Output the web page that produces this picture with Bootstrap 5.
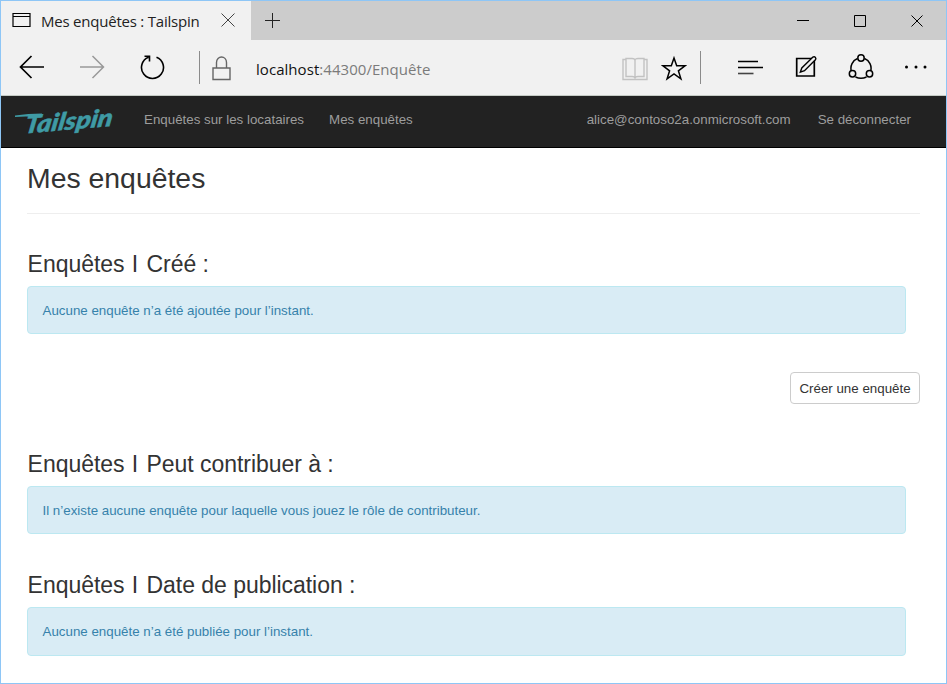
<!DOCTYPE html>
<html lang="fr">
<head>
<meta charset="utf-8">
<meta name="viewport" content="width=device-width, initial-scale=1">
<title>Mes enquêtes : Tailspin</title>
<link href="https://cdn.jsdelivr.net/npm/bootstrap@5.3.0/dist/css/bootstrap.min.css" rel="stylesheet">
<style>
body{font-family:"Liberation Sans",Arial,sans-serif;font-size:13.33px;color:#333;background:#fff}
svg{display:block;flex:none;fill:none;stroke:#000}
.window-frame{height:684px;border:1px solid #8ec6f6;overflow:hidden}
.tab-strip{height:39px;background:#ccc}
.active-tab{width:250px;background:#f1f1f1;padding-left:11px;font:15px "Open Sans",sans-serif;color:#222}
.tab-title{width:160px;margin-left:10px;letter-spacing:-.22px;white-space:nowrap}
.tab-close{margin-left:20px;margin-bottom:2px}
.window-controls{gap:43px;padding-right:22px}
.address-row{height:56px;background:#f1f1f1;border-bottom:1px solid #c5cbc5;padding:0 18px 1px}
.divider{width:1px;height:33px;background:#8b8b8b;flex:none}
.address{font:15px "Open Sans",sans-serif;color:#7b7b7b;margin-left:24px;padding-top:3px;letter-spacing:.05px;white-space:nowrap}
.address span{color:#111}
.site-nav{height:52px;background:#222;border-bottom:1px solid #000;padding:0 35px 4px 13px}
.site-nav .nav-link{color:#9d9d9d;padding:0;white-space:nowrap}
.page-body{padding:15px 26px 0}
.page-title{font-size:28.4px;font-weight:400;line-height:31px;height:51px;border-bottom:1px solid #eee;margin:0 0 35px}
.section-title{font-size:23px;line-height:30px;height:37px;font-weight:400;margin:0;white-space:nowrap;letter-spacing:-.04px;padding-left:.6px}
.section-title i{font-style:normal;margin:0 2px 0 1px}
.notice{width:879px;height:48px;margin:0;padding:0 14.5px;border-radius:4px;color:#3682ab;background:#d9ecf5;border:1px solid #bce8f1;line-height:47px}
.create-btn{width:130px;height:32px;font-size:13.33px;padding:1px 0 0;border:1px solid #ccc;border-radius:4px;color:#333;background:#fff}
.create-row{margin:38px 0 45px}
.published{margin-top:36px}
.published .notice{height:49px}
</style>
</head>
<body>
<div class="window-frame">
  <header class="tab-strip d-flex">
    <div class="active-tab d-flex align-items-center">
      <svg width="19" height="16" style="margin-bottom:1px" stroke="#222"><path d="M1 1.500h17v13H1zM1 4.500h17" stroke-width="1.200"/></svg>
      <span class="tab-title">Mes enquêtes : Tailspin</span>
      <svg class="tab-close" width="14" height="14"><path d="M.5.5l13 13M13.500.5l-13 13" stroke="#444"/></svg>
    </div>
    <svg width="44" height="39"><path d="M14 19.500h15M21.500 12v15" stroke="#222"/></svg>
    <div class="window-controls d-flex align-items-center ms-auto">
      <svg width="14" height="14"><path d="M1 6.500h12"/></svg>
      <svg width="14" height="14"><path d="M1.500 1.500h11v11h-11z"/></svg>
      <svg width="14" height="14"><path d="M1.500 1.500l11 11M12.500 1.500l-11 11"/></svg>
    </div>
  </header>
  <div class="address-row d-flex align-items-center">
    <svg width="26" height="24"><path d="M12.500 1L1.500 12l11 11M1.500 12H25" stroke-width="1.700"/></svg>
    <svg width="26" height="24" style="margin-left:34px"><path d="M13.500 1l11 11-11 11M24.500 12H1" stroke="#999" stroke-width="1.500"/></svg>
    <svg width="26" height="26" style="margin-left:35px"><path d="M16.500 3.200A11 11 0 1 1 8.500 3.200M4.500 2.200H9.500V7.500" stroke-width="1.600"/></svg>
    <div class="divider" style="margin-left:33px"></div>
    <svg width="20" height="25" style="margin-left:12px;margin-top:2px"><path d="M1 12h17v11.500H1zM4.500 12V6.500C4.500-.8 14.500-.8 14.500 6.500V12" stroke="#666" stroke-width="1.400"/></svg>
    <div class="address"><span>localhost</span>:44300/Enquête</div>
    <svg class="ms-auto" width="26" height="24" style="margin-top:3px"><path d="M4 2.500H1v20h24v-20h-3M4 1.500h6q3 0 3 2 0-2 3-2h6v18h-6q-3 0-3 2 0-2-3-2H4zM13 3.500v18" stroke="#c2c2c2" stroke-width="1.400"/></svg>
    <svg width="26" height="26" style="margin-left:13px;margin-top:2px"><path d="M13 3l2.700 7.800H24l-6.600 5 2.500 8L13 19l-6.900 4.800 2.500-8-6.600-5h8.300z" stroke-width="1.500"/></svg>
    <div class="divider" style="margin-left:13px"></div>
    <svg width="26" height="18" style="margin-left:36px;margin-bottom:1px"><path d="M1 3.500h20M1 9.500h25" stroke-width="1.300"/><path d="M1 15.500h15.500" stroke="#444" stroke-width="1.600"/></svg>
    <svg width="24" height="24" style="margin-left:31px"><path d="M2.700 3.500H20.300v17.500H2.700z" stroke-width="1.700"/><path d="M6.300 17.200l1.500-4.200L18.700 2.200q1.600-1 2.700.2 1 1.200 0 2.400L10.500 15.700z" fill="#f1f1f1" stroke-width="1.400"/></svg>
    <svg width="26" height="26" style="margin-left:30px" stroke-width="1.500"><path d="M9.500 4.500A10.500 10.500 0 0 0 3.300 17M16.500 4.500A10.500 10.500 0 0 1 22.700 17M7.500 23q5.500 2.500 11 0"/><circle cx="13" cy="4" r="3.200"/><circle cx="4.500" cy="19.800" r="3.200"/><circle cx="21.500" cy="19.800" r="3.200"/></svg>
    <svg width="25" height="6" style="margin-left:29px"><g fill="#000" stroke="none"><circle cx="3.500" cy="3" r="1.500"/><circle cx="13" cy="3" r="1.500"/><circle cx="22" cy="3" r="1.500"/></g></svg>
  </div>
  <nav class="site-nav navbar-expand d-flex align-items-center">
    <svg width="102" height="34" style="margin-top:3px" role="img" aria-label="Tailspin"><g fill="#3f9ba5" stroke="none"><text x="0" y="0" textLength="88" lengthAdjust="spacingAndGlyphs" transform="translate(10 29.500) rotate(-5) skewX(-14)" font-family="Lato" font-size="24" font-weight="900" font-style="italic" stroke="#3f9ba5" stroke-width=".5">Tailspin</text><path d="M1 11.500q13-2 27-2l-1 4q-12-1.500-26-.5z"/></g></svg>
    <div class="navbar-nav" style="margin-left:28px;gap:25px">
      <a class="nav-link" href="#">Enquêtes sur les locataires</a>
      <a class="nav-link" href="#">Mes enquêtes</a>
    </div>
    <div class="navbar-nav ms-auto" style="gap:27px">
      <a class="nav-link" href="#">alice@contoso2a.onmicrosoft.com</a>
      <a class="nav-link" href="#">Se déconnecter</a>
    </div>
  </nav>
  <main class="page-body">
    <h1 class="page-title">Mes enquêtes</h1>
    <section>
      <h2 class="section-title">Enquêtes <i>I</i> Créé :</h2>
      <div class="alert notice">Aucune enquête n’a été ajoutée pour l’instant.</div>
    </section>
    <div class="create-row d-flex justify-content-end"><button class="btn create-btn" type="button">Créer une enquête</button></div>
    <section>
      <h2 class="section-title">Enquêtes <i>I</i> Peut contribuer à :</h2>
      <div class="alert notice">Il n’existe aucune enquête pour laquelle vous jouez le rôle de contributeur.</div>
    </section>
    <section class="published">
      <h2 class="section-title">Enquêtes <i>I</i> Date de publication :</h2>
      <div class="alert notice">Aucune enquête n’a été publiée pour l’instant.</div>
    </section>
  </main>
</div>
<script src="https://cdn.jsdelivr.net/npm/bootstrap@5.3.0/dist/js/bootstrap.bundle.min.js"></script>
</body>
</html>
